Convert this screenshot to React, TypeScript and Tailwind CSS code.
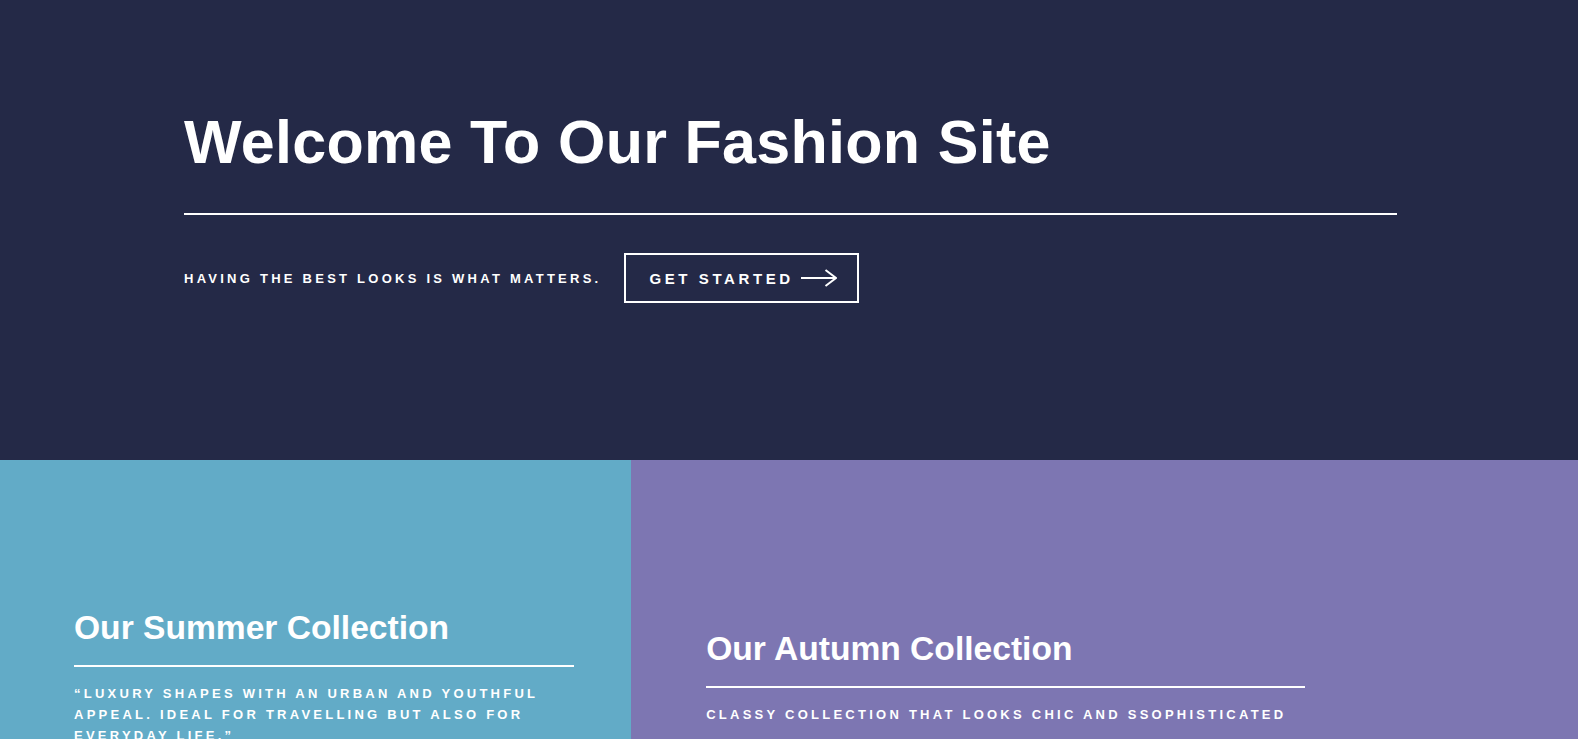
const font = { fontFamily: '"Liberation Sans", Arial, sans-serif' };

function ArrowRight() {
  return (
    <svg width="36" height="18" viewBox="0 0 36 18" fill="none">
      <path d="M0 9H35" stroke="white" strokeWidth="2" />
      <path d="M24.5 1L35 9L24.5 17" stroke="white" strokeWidth="2" />
    </svg>
  );
}

export default function App() {
  return (
    <div className="h-screen overflow-hidden text-white" style={font}>
      {/* Hero */}
      <section className="h-[460px] bg-[#242947] pl-[184px] pr-[181px] pt-[112px]">
        <h1 className="text-[61px] font-bold leading-none tracking-[0.3px]">
          Welcome To Our Fashion Site
        </h1>
        <div className="mt-[40px] h-[2px] bg-white"></div>
        <div className="mt-[38px] flex items-center gap-[23px]">
          <p className="text-[13px] font-bold uppercase leading-none tracking-[0.25em]">
            Having the best looks is what matters.
          </p>
          <a
            href="#"
            className="flex h-[50px] items-center border-2 border-white pl-[23px] pr-[20px]"
          >
            <span className="text-[15px] font-bold uppercase leading-none tracking-[0.24em]">
              Get Started
            </span>
            <span className="ml-[7px] flex">
              <ArrowRight />
            </span>
          </a>
        </div>
      </section>

      {/* Collections */}
      <section className="flex h-[437px]">
        <div className="flex w-2/5 items-center bg-[#62abc7] pl-[74px]">
          <div className="w-[500px]">
            <h2 className="text-[33.6px] font-bold leading-none">
              Our Summer Collection
            </h2>
            <div className="mt-[20px] h-[2px] bg-white"></div>
            <p className="mt-[16px] text-[13px] font-bold uppercase leading-[21px] tracking-[0.25em]">
              “Luxury shapes with an urban and youthful appeal. Ideal for
              travelling but also for everyday life.”
            </p>
          </div>
        </div>
        <div className="flex w-3/5 items-center bg-[#7d76b2] pl-[75px]">
          <div className="w-[599px]">
            <h2 className="text-[33.6px] font-bold leading-none">
              Our Autumn Collection
            </h2>
            <div className="mt-[20px] h-[2px] bg-white"></div>
            <p className="mt-[16px] text-[13px] font-bold uppercase leading-[21px] tracking-[0.25em]">
              Classy collection that looks chic and ssophisticated
            </p>
          </div>
        </div>
      </section>
    </div>
  );
}
